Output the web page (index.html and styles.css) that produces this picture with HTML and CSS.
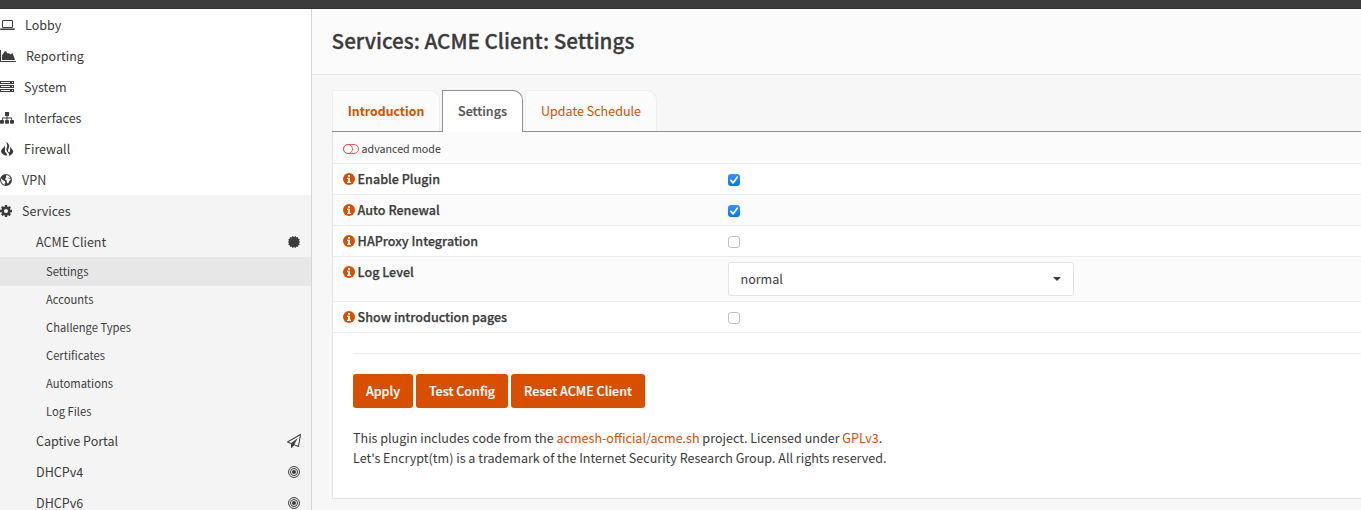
FILE: index.html
```
<!DOCTYPE html>
<html lang="en">
<head>
<meta charset="utf-8">
<title>Services: ACME Client: Settings</title>
<link rel="stylesheet" href="styles.css">
</head>
<body>
<svg class="defs" width="0" height="0">
  <symbol id="info" viewBox="0 0 12 12"><circle cx="6" cy="6" r="6"/><path fill="#fff" d="M5 2h2v1.700H5zM4 4.800h3v3.900h1V10H4V8.700h1V6.100H4z"/></symbol>
  <symbol id="bullseye" viewBox="0 0 12 12"><g fill="none" stroke="currentColor"><circle cx="6" cy="6" r="5.45"/><circle cx="6" cy="6" r="3.5"/></g><circle cx="6" cy="6" r="2"/></symbol>
</svg>
<div class="topbar"></div>
<div class="layout">
  <nav class="sidebar">
    <a class="item"><svg class="icon" width="15" height="14" viewBox="0 0 15 14"><path fill-rule="evenodd" d="M3.200 2h8.600q1.200 0 1.200 1.200v5.600q0 1.200-1.200 1.200H3.200Q2 10 2 8.800V3.200Q2 2 3.200 2zM3 3v6h9V3zM0 10.600h15v.5q0 .9-1.200.9H1.200Q0 12 0 11.100z"/></svg><span class="gap-l">Lobby</span></a>
    <a class="item"><svg class="icon" width="16" height="14" viewBox="0 0 16 14"><path d="M0 1h1v11h15v1H0zM2 11V6.500L5 2l1 .6 1.500 2L9 4.200l1.500 1.400L12.500 4l2.500 7z"/></svg><span class="gap-l">Reporting</span></a>
    <a class="item"><svg class="icon" width="14" height="14" viewBox="0 0 14 14"><path fill-rule="evenodd" d="M0 1h14v3H0zM1 2v1h9V2zM12 2v1h1V2zM0 5h14v3H0zM1 6v1h9V6zM12 6v1h1V6zM0 9h14v3H0zM1 10v1h9v-1zM12 10v1h1v-1z"/></svg><span class="gap-l">System</span></a>
    <a class="item"><svg class="icon" width="14" height="14" viewBox="0 0 14 14"><path d="M5 1h4v4H7.500v1.500H12V9h1.200q.8 0 .8.800V12q0 .8-.8.800h-2.400q-.8 0-.8-.8V9.800q0-.8.8-.8h.4V7.500H7.500V9h.7q.8 0 .8.800V12q0 .8-.8.800H5.800Q5 12.800 5 12V9.800Q5 9 5.800 9h.7V7.500H2.800V9h.4q.8 0 .8.800V12q0 .8-.8.800H.8Q0 12.800 0 12V9.800Q0 9 .8 9H2V6.500h4.500V5H5z"/></svg><span class="gap-l">Interfaces</span></a>
    <a class="item"><svg class="icon" width="14" height="14" viewBox="0 0 14 14"><path d="M6.300 0Q9.800 2 9 5.500 7.800 7.500 8 9q.3 1.300 1.300 1.200 1-.3.700-1.700Q9.600 6.500 10.600 4q-.3 1.500 1 2.800 1.700 1.500 1.700 3Q12.800 12.500 8.600 14q1.200-1.800 0-2.800Q6 9.600 6.400 7 8 3.500 6.300 0zM4.300 3.500Q5.600 6 4.900 8.200q-.2 1.900 1.300 2.800 1.200 1 .6 2.800Q1.800 13 1 9.500.900 7.500 3 6 4.400 5 4.300 3.500z"/></svg><span class="gap-l">Firewall</span></a>
    <a class="item"><svg class="icon" width="12" height="14" viewBox="0 0 12 14"><path fill-rule="evenodd" d="M6 1a6 6 0 1 0 0 12A6 6 0 0 0 6 1zM6.300 2.100q3 .2 4.200 2.800l-.8.300-.7-.7-.8.600 1.100.7.900-.2.500.7-.2.800-1.200.8-.8 2-1 .7-.8-1.500.1-1.500-1.300-.5-.3-1.500 1.200-1.300-.5-.7zM1.200 5.500l1.600 1.600 1.800.8.800 1.300-.7 1.200v1.500Q1.200 10.600 1 7z"/></svg><span class="gap-l">VPN</span></a>
    <div class="open">
      <a class="item"><svg class="icon" width="12" height="14" viewBox="128 0 1536 1792"><path d="M1152 896q0-106-75-181t-181-75-181 75-75 181 75 181 181 75 181-75 75-181zm512-109v222q0 12-8 23t-20 13l-185 28q-19 54-39 91 35 50 107 138 10 12 10 25t-9 23q-27 37-99 108t-94 71q-12 0-26-9l-138-108q-44 23-91 38-16 136-29 186-7 28-36 28h-222q-14 0-24.500-8.500t-11.500-21.500l-28-184q-49-16-90-37l-141 107q-10 9-25 9-14 0-25-11-126-114-165-168-7-10-7-23 0-12 8-23 15-21 51-66.500t54-70.500q-27-50-41-99l-183-27q-13-2-21-12.500t-8-23.500v-222q0-12 8-23t19-13l186-28q14-46 39-92-40-57-107-138-10-12-10-24 0-10 9-23 26-36 98.500-107.500t94.500-71.500q13 0 26 10l138 107q44-23 91-38 16-136 29-186 7-28 36-28h222q14 0 24.500 8.500t11.500 21.500l28 184q49 16 90 37l142-107q9-9 24-9 13 0 25 10 129 119 165 170 7 8 7 22 0 12-8 23-15 21-51 66.500t-54 70.500q26 50 41 98l183 28q13 2 21 12.500t8 23.500z"/></svg><span class="gap-l">Services</span></a>
      <a class="item sub"><span>ACME Client</span><svg class="icon" width="12" height="12" viewBox="0 0 12 12"><path d="M6 .9 7.500 0l.9 1.400 1.700-.3.100 1.700 1.600.5-.8 1.400L12 6l-1 1.300.8 1.400-1.600.5-.1 1.700-1.700-.3L7.500 12 6 11.100 4.500 12l-.9-1.400-1.700.3-.1-1.700L.2 8.700 1 7.300 0 6l1-1.300L.2 3.300l1.600-.5.100-1.700 1.700.3L4.500 0z"/></svg></a>
      <a class="leaf active">Settings</a>
      <a class="leaf">Accounts</a>
      <a class="leaf">Challenge Types</a>
      <a class="leaf">Certificates</a>
      <a class="leaf">Automations</a>
      <a class="leaf">Log Files</a>
      <a class="item sub lower plane"><span>Captive Portal</span><svg class="icon" width="14" height="14" viewBox="0 0 1792 1792"><path d="M1764 11q33 24 27 64l-256 1536q-5 29-32 45-14 8-31 8-11 0-24-5l-527-215-298 327q-18 21-47 21-14 0-23-4-19-7-30-23.500t-11-36.500v-452l-472-193q-37-14-40-55-3-39 32-59l1664-960q35-21 68 2zm-342 1499l221-1323-1434 827 336 137 863-639-478 797z"/></svg></a>
      <a class="item sub lower"><span>DHCPv4</span><svg class="icon" width="12" height="12"><use href="#bullseye"/></svg></a>
      <a class="item sub lower"><span>DHCPv6</span><svg class="icon" width="12" height="12"><use href="#bullseye"/></svg></a>
    </div>
  </nav>
  <main class="main">
    <header class="head"><h1>Services: ACME Client: Settings</h1></header>
    <div class="tabs">
      <a class="tab intro">Introduction</a>
      <a class="tab current">Settings</a>
      <a class="tab schedule">Update Schedule</a>
    </div>
    <section class="panel">
      <div class="row odd"><div class="label mode"><svg width="16" height="10" viewBox="0 0 16 10"><g fill="none" stroke="#ef5a62" stroke-width="1"><rect x=".5" y=".5" width="15" height="9" rx="4.500"/><circle cx="5" cy="5" r="4.500"/></g></svg><small>advanced mode</small></div></div>
      <div class="row"><div class="label"><svg class="info"><use href="#info"/></svg><b>Enable Plugin</b></div><span class="check on"><svg width="12" height="12"><path d="M2.800 6.300 5 8.900 9.200 3.200"/></svg></span></div>
      <div class="row odd"><div class="label"><svg class="info"><use href="#info"/></svg><b>Auto Renewal</b></div><span class="check on"><svg width="12" height="12"><path d="M2.800 6.300 5 8.900 9.200 3.200"/></svg></span></div>
      <div class="row"><div class="label"><svg class="info"><use href="#info"/></svg><b>HAProxy Integration</b></div><span class="check"></span></div>
      <div class="row odd tall"><div class="label"><svg class="info"><use href="#info"/></svg><b>Log Level</b></div><div class="select"><span>normal</span><i class="caret"></i></div></div>
      <div class="row"><div class="label"><svg class="info"><use href="#info"/></svg><b>Show introduction pages</b></div><span class="check"></span></div>
      <div class="foot">
        <div class="buttons"><button class="b1">Apply</button><button class="b2">Test Config</button><button class="b3">Reset ACME Client</button></div>
        <p>This plugin includes code from the <a>acmesh-official/acme.sh</a> project. Licensed under <a>GPLv3</a>.<br>Let's Encrypt(tm) is a trademark of the Internet Security Research Group. All rights reserved.</p>
      </div>
    </section>
  </main>
</div>
</body>
</html>
```
FILE: styles.css
```
* { box-sizing: border-box; }
body {
  margin: 0;
  height: 510px;
  overflow: hidden;
  background: #f7f7f7;
  color: #3c3c3b;
  font: 12.55px/20px "Noto Sans CJK SC", "Noto Sans", sans-serif;
}
.defs { display: none; }
.topbar { height: 9px; background: #3c3c3b; border-bottom: 1px solid #2f3133; }
.layout { display: flex; height: 501px; }
svg { flex: none; fill: currentColor; }

.sidebar { width: 312px; flex: none; background: #fff; border-right: 1px solid #d6d6d6; }
.item { display: flex; align-items: center; height: 31px; padding-top: 1px; }
.gap-l { margin-left: 10px; }
.open { background: #f4f4f4; }
.sub { justify-content: space-between; padding: 1px 11px 0 36px; }
.lower { padding-top: 0; padding-bottom: 1px; }
.plane { padding-right: 10px; }
.leaf { display: flex; align-items: center; height: 28px; padding: 0 0 2px 46px; font-size: 11.2px; }
.active { height: 29px; background: #e7e7e7; }

.main { flex: 1; min-width: 0; overflow: hidden; }
.head { height: 66px; background: #fbfbfb; border-bottom: 1px solid #eaeaea; padding: 16px 19.600px 0; }
h1 { margin: 0; font-size: 20.65px; line-height: 30px; font-weight: 500; -webkit-text-stroke: .3px; }

.tabs { display: flex; gap: 2px; height: 57px; margin-left: 20px; padding-top: 15px; border-bottom: 1px solid #8f8f8f; }
.tab {
  display: flex; align-items: center; justify-content: center;
  height: 41px; padding-bottom: 1px;
  border: 1px solid #eee; border-bottom: 0; border-radius: 0 10px 0 0;
  background: #fbfbfb; color: #d94f00;
}
.intro { width: 108px; font-weight: 700; font-size: 12.3px; }
.current { width: 81px; height: 42px; padding-bottom: 2px; background: #fff; border-color: #8f8f8f; color: #555; font-weight: 500; -webkit-text-stroke: .2px; }
.schedule { width: 132px; }

.panel { height: 367px; margin-left: 20px; background: #fff; border-left: 1px solid #e3e3e3; border-bottom: 1px solid #e3e3e3; }
.row { display: flex; align-items: flex-start; height: 31px; padding: 5px 10px 5px 9.600px; border-bottom: 1px solid #ebebeb; }
.row.odd { background: #fbfbfb; }
.row:first-child { height: 32px; padding-top: 7px; }
.tall { height: 45px; }
.label { display: flex; align-items: center; width: 385.400px; gap: 3px; }
.label b { font-weight: 500; -webkit-text-stroke: .25px; }
.info { width: 12px; height: 12px; fill: #d94f00; }
.mode small { font-size: 10.65px; }
.check { width: 12px; height: 12px; margin-top: 5px; border: 1px solid #c1c1c1; border-radius: 3px; background: #fff; }
.check.on { border: 0; background: linear-gradient(#3593ff, #0874f8); }
.check svg { display: block; fill: none; stroke: #fff; stroke-width: 1.7; stroke-linecap: round; stroke-linejoin: round; }
.select {
  display: flex; align-items: center; justify-content: space-between;
  width: 346px; height: 34px; padding: 0 12px 0 11.500px;
  background: #fff; border: 1px solid #e3e3e3; border-radius: 3px;
}
.caret { border: 4.500px solid transparent; border-top-color: #3c3c3b; border-bottom: 0; border-top-width: 4px; }

.foot { margin: 20px 0 0 20px; padding-top: 20px; border-top: 1px solid #ebebeb; }
.buttons { display: flex; gap: 3px; }
button { height: 34px; padding: 0; border: 0; border-radius: 3px; background: #d94f00; color: #fff; font: inherit; font-weight: 500; -webkit-text-stroke: .2px; }
.b1 { width: 60px; }
.b2 { width: 92px; }
.b3 { width: 134px; }
p { margin: 20px 0 0; }
p a { color: #d94f00; }
```
